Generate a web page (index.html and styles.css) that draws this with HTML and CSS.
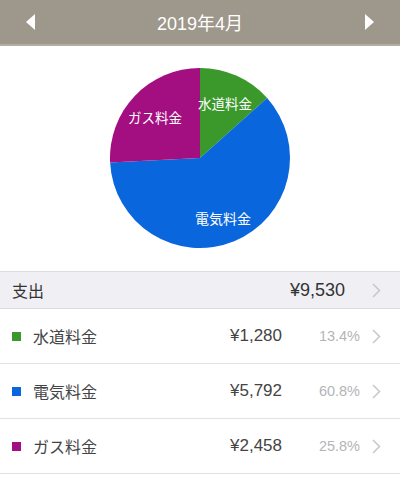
FILE: index.html
```html
<!DOCTYPE html>
<html lang="ja">
<head>
<meta charset="utf-8">
<link rel="stylesheet" href="styles.css">
</head>
<body>
<header class="nav">
  <svg class="arrow" width="10" height="16" viewBox="0 0 10 16"><path d="M9 0 L9 16 L0 8 Z" fill="#fff"/></svg>
  <div class="title">2019年4月</div>
  <svg class="arrow" width="10" height="16" viewBox="0 0 10 16"><path d="M1 0 L1 16 L10 8 Z" fill="#fff"/></svg>
</header>
<section class="chart">
  <div class="pie">
    <svg width="180" height="180" viewBox="0 0 180 180">
      <path d="M90 90 L90 0 A90 90 0 0 1 157.14 30.06 Z" fill="#3b992b"/>
      <path d="M90 90 L157.14 30.06 A90 90 0 1 1 0.11 94.52 Z" fill="#0a66dc"/>
      <path d="M90 90 L0.11 94.52 A90 90 0 0 1 90 0 Z" fill="#a30f80"/>
    </svg>
    <span class="lbl lbl-water">水道料金</span>
    <span class="lbl lbl-gas">ガス料金</span>
    <span class="lbl lbl-elec">電気料金</span>
  </div>
</section>
<div class="summary">
  <span class="s-label">支出</span>
  <span class="s-amount">¥9,530</span>
  <span class="chev"><svg width="9" height="15" viewBox="0 0 9 15"><path d="M1 1 L7.5 7.5 L1 14" fill="none" stroke="#c7c7cc" stroke-width="1.5"/></svg></span>
</div>
<ul class="list">
  <li class="row">
    <span class="sq green"></span>
    <span class="name">水道料金</span>
    <span class="amt">¥1,280</span>
    <span class="pct">13.4%</span>
    <span class="chev"><svg width="9" height="15" viewBox="0 0 9 15"><path d="M1 1 L7.5 7.5 L1 14" fill="none" stroke="#c7c7cc" stroke-width="1.5"/></svg></span>
  </li>
  <li class="row">
    <span class="sq blue"></span>
    <span class="name">電気料金</span>
    <span class="amt">¥5,792</span>
    <span class="pct">60.8%</span>
    <span class="chev"><svg width="9" height="15" viewBox="0 0 9 15"><path d="M1 1 L7.5 7.5 L1 14" fill="none" stroke="#c7c7cc" stroke-width="1.5"/></svg></span>
  </li>
  <li class="row">
    <span class="sq purple"></span>
    <span class="name">ガス料金</span>
    <span class="amt">¥2,458</span>
    <span class="pct">25.8%</span>
    <span class="chev"><svg width="9" height="15" viewBox="0 0 9 15"><path d="M1 1 L7.5 7.5 L1 14" fill="none" stroke="#c7c7cc" stroke-width="1.5"/></svg></span>
  </li>
</ul>
</body>
</html>
```
FILE: styles.css
```css
* { box-sizing: border-box; }
html, body { margin: 0; padding: 0; background: #fff; }
body {
  width: 400px;
  font-family: "Liberation Sans", "Noto Sans CJK JP", sans-serif;
  color: #333;
}
.nav {
  height: 46px;
  background: #9e978b;
  border-bottom: 2px solid #b3ada3;
  display: flex;
  align-items: center;
  justify-content: space-between;
  padding: 0 26px 0 26px;
}
.arrow { display: block; }
.title {
  color: #fff;
  font-size: 18px;
  font-family: "Liberation Sans", "Noto Sans CJK JP", sans-serif;
}
.chart {
  height: 225px;
  display: flex;
  justify-content: center;
  padding-top: 22px;
}
.pie {
  position: relative;
  width: 180px;
  height: 180px;
}
.pie svg { display: block; }
.lbl {
  position: absolute;
  color: #fff;
  font-size: 13.5px;
  font-family: "Noto Sans CJK JP", sans-serif;
  line-height: 16px;
  white-space: nowrap;
}
.lbl-water { left: 88px; top: 27px; }
.lbl-gas { left: 18px; top: 41px; }
.lbl-elec { left: 85px; top: 142px; font-size: 14px; }
.summary {
  height: 38px;
  background: #efeff4;
  border-top: 1px solid #dcdce0;
  border-bottom: 1px solid #dcdce0;
  display: flex;
  align-items: center;
  padding-left: 12px;
}
.s-label {
  flex: 1;
  font-size: 16px;
  font-family: "Noto Sans CJK JP", sans-serif;
  color: #333;
}
.s-amount {
  font-size: 18px;
  color: #333;
}
.chev {
  width: 55px;
  display: flex;
  justify-content: flex-start;
  padding-left: 27px;
}
.chev svg { display: block; }
.list { list-style: none; margin: 0; padding: 0; }
.row {
  height: 55px;
  border-bottom: 1px solid #e2e2e4;
  display: flex;
  align-items: center;
  padding-left: 12px;
}
.sq { width: 9px; height: 9px; margin-right: 12px; }
.green { background: #3b992b; }
.blue { background: #0a66dc; }
.purple { background: #a30f80; }
.name {
  flex: 1;
  font-size: 16px;
  font-family: "Noto Sans CJK JP", sans-serif;
  color: #444;
}
.amt { font-size: 17px; color: #444; }
.pct {
  width: 78px;
  text-align: right;
  font-size: 14.5px;
  color: #b4b4b8;
}
.row .chev { width: 40px; padding-left: 12px; }
```
